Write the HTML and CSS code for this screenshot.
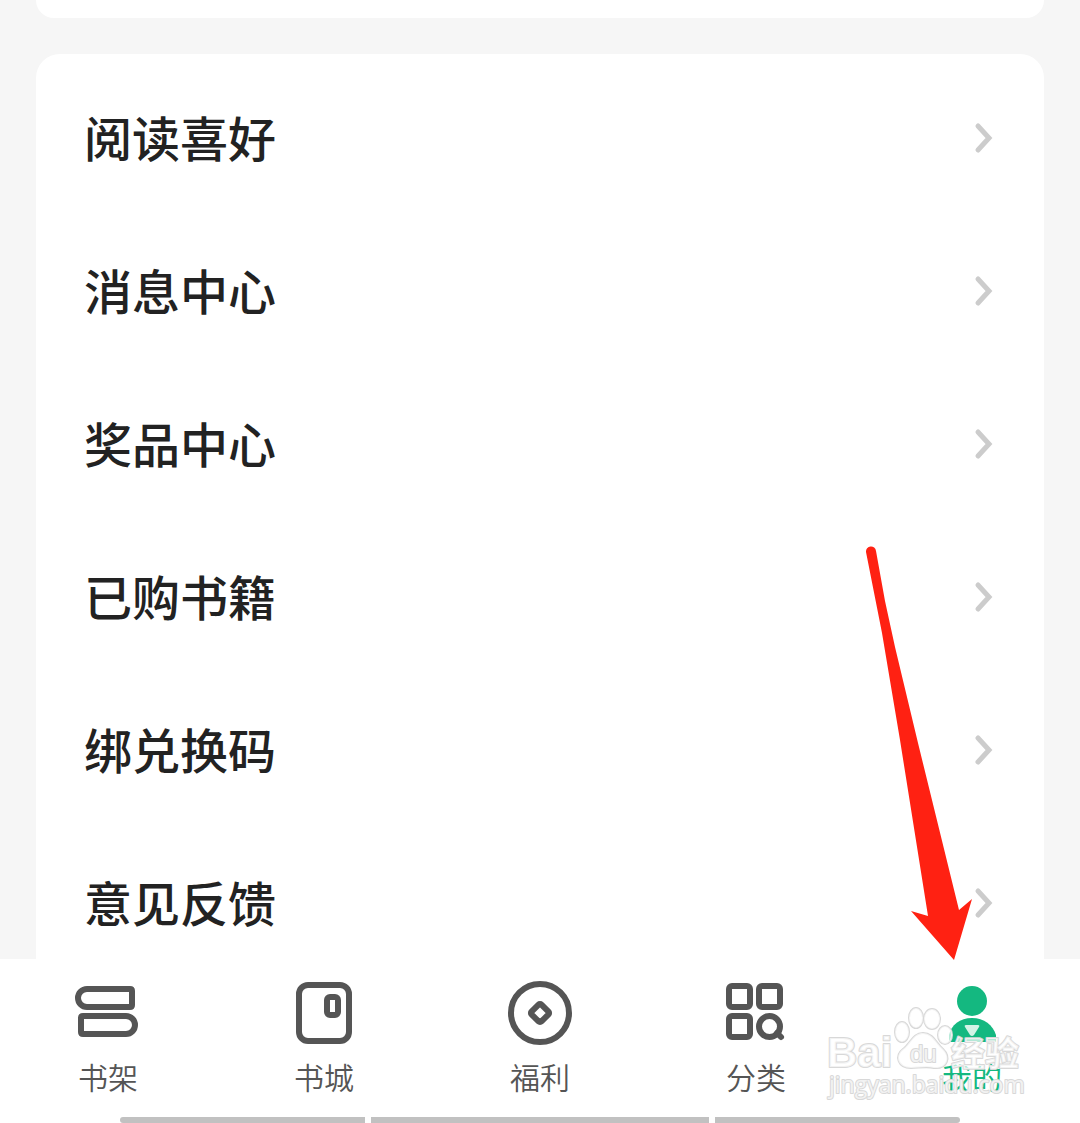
FILE: index.html
```html
<!DOCTYPE html>
<html lang="zh-CN">
<head>
  <meta charset="UTF-8">
  <meta name="viewport" content="width=device-width, initial-scale=1.0">
  <title>我的</title>
  <link rel="stylesheet" href="styles.css">
</head>
<body>
  <div class="app">
    <main class="content">
      <section class="card card-prev"></section>
      <section class="card">
        <a class="row" href="#"><span>阅读喜好</span><svg class="arrow" viewBox="0 0 20 32"><path d="M4 4l11 12L4 28"/></svg></a>
        <a class="row" href="#"><span>消息中心</span><svg class="arrow" viewBox="0 0 20 32"><path d="M4 4l11 12L4 28"/></svg></a>
        <a class="row" href="#"><span>奖品中心</span><svg class="arrow" viewBox="0 0 20 32"><path d="M4 4l11 12L4 28"/></svg></a>
        <a class="row" href="#"><span>已购书籍</span><svg class="arrow" viewBox="0 0 20 32"><path d="M4 4l11 12L4 28"/></svg></a>
        <a class="row" href="#"><span>绑兑换码</span><svg class="arrow" viewBox="0 0 20 32"><path d="M4 4l11 12L4 28"/></svg></a>
        <a class="row" href="#"><span>意见反馈</span><svg class="arrow" viewBox="0 0 20 32"><path d="M4 4l11 12L4 28"/></svg></a>
      </section>
    </main>

    <nav class="tab-bar">
      <a class="tab-item" href="#">
        <svg class="icon" viewBox="0 0 64 64">
          <path d="M11 8H54q2 0 2 2V24q0 2-2 2H11a9 9 0 0 1 0-18z"/>
          <path d="M50 35H7q-2 0-2 2V51q0 2 2 2H50a9 9 0 0 0 0-18z"/>
        </svg>
        <span>书架</span>
      </a>
      <a class="tab-item" href="#">
        <svg class="icon" viewBox="0 0 64 64">
          <rect x="7" y="4" width="50" height="56" rx="9"/>
          <rect x="35" y="16" width="11" height="18" rx="3"/>
        </svg>
        <span>书城</span>
      </a>
      <a class="tab-item" href="#">
        <svg class="icon" viewBox="0 0 64 64">
          <circle cx="32" cy="32" r="29"/>
          <rect x="25" y="25" width="14" height="14" rx="2" transform="rotate(45 32 32)"/>
        </svg>
        <span>福利</span>
      </a>
      <a class="tab-item" href="#">
        <svg class="icon" viewBox="0 0 64 64">
          <rect x="5" y="5" width="21" height="21" rx="3"/>
          <rect x="35" y="5" width="21" height="21" rx="3"/>
          <rect x="5" y="35" width="21" height="21" rx="3"/>
          <circle cx="45.500" cy="45.500" r="10.500"/>
          <path d="M53 52l4 4"/>
        </svg>
        <span>分类</span>
      </a>
      <a class="tab-item active" href="#">
        <svg class="icon" viewBox="0 0 64 64">
          <circle cx="32" cy="20" r="15"/>
          <path d="M9 61V54C11 44 20 37 32 37S53 44 56 54V61z"/>
          <path class="collar" d="M26 44H38q2 0 1 2L34 54q-2 2-4 0L25 46q-1-2 1-2z"/>
        </svg>
        <span>我的</span>
      </a>
      <svg class="watermark" viewBox="0 0 200 104">
        <g class="mark">
          <text x="1" y="66" class="bai">Bai</text>
          <ellipse cx="76" cy="31" rx="7" ry="10"/>
          <ellipse cx="90" cy="17" rx="7" ry="10"/>
          <ellipse cx="106" cy="18" rx="8" ry="10"/>
          <ellipse cx="119" cy="34" rx="7" ry="9"/>
          <path d="M97 32C87 32 84 43 77 48C68 55 72 67 85 67C92 67 101 65 108 67C122 68 125 56 117 48C110 42 107 32 97 32z"/>
          <text x="84" y="61" class="du">du</text>
          <text x="125" y="65" class="jingyan">经验</text>
          <text x="3" y="92" class="url">jingyan.baidu.com</text>
        </g>
      </svg>
    </nav>
    <div class="home-bar"><i></i><i></i><i></i></div>

    <svg class="pointer" viewBox="0 0 110 415">
      <path d="M1 6A5 5 0 0 1 11 5L20 55L30 101L53 197L94 364L107 353L89 414L46 365L63 370L35 194L17 87z"/>
    </svg>
  </div>
</body>
</html>
```
FILE: styles.css
```css
* {
  box-sizing: border-box;
}

body {
  margin: 0;
  background: #f6f6f6;
  font-family: "Noto Sans CJK SC", sans-serif;
}

.app {
  position: relative;
  display: flex;
  flex-direction: column;
  height: 100vh;
}

.content {
  flex: 1;
  min-height: 0;
  padding: 0 36px;
  overflow: hidden;
}

.card {
  padding: 7px 50px 7px 48px;
  border-radius: 24px;
  background: #fff;
}

.card-prev {
  height: 18px;
  margin-bottom: 36px;
  border-radius: 0 0 24px 24px;
}

.row {
  display: flex;
  align-items: center;
  justify-content: space-between;
  height: 153px;
  color: #222;
  font-size: 48px;
  font-weight: 500;
  line-height: 72px;
  text-decoration: none;
}

.row span {
  padding-bottom: 4px;
}

.arrow {
  width: 20px;
  height: 32px;
  fill: none;
  stroke: #ccc;
  stroke-width: 5;
  stroke-linecap: round;
}

.tab-bar {
  position: relative;
  display: flex;
  height: 158px;
  padding-top: 22px;
  background: #fff;
}

.tab-item {
  flex: 1;
  display: flex;
  flex-direction: column;
  align-items: center;
  gap: 11px;
  color: #555;
  font-size: 30px;
  font-weight: 350;
  line-height: 40px;
  text-decoration: none;
}

.tab-item.active {
  color: #14b880;
  font-weight: 400;
}

.icon {
  width: 64px;
  height: 64px;
  fill: none;
  stroke: #555;
  stroke-width: 6;
  stroke-linecap: round;
  overflow: visible;
}

.active .icon {
  fill: #14b880;
  stroke: none;
}

.active .collar {
  fill: #d3f3e6;
}

/* 水印 */
.watermark {
  position: absolute;
  right: 54px;
  bottom: 12px;
  width: 200px;
  height: 104px;
  pointer-events: none;
}

.mark {
  fill: #fff;
  fill-opacity: .7;
  stroke: #d8d8d8;
  stroke-width: 2;
  stroke-linejoin: round;
  paint-order: stroke;
  font-family: "Open Sans", "Noto Sans CJK SC", sans-serif;
}

.bai {
  font-family: "Liberation Sans", sans-serif;
  font-size: 42px;
  font-weight: 700;
}

.du {
  font-family: "Liberation Sans", sans-serif;
  font-size: 24px;
}

.jingyan {
  font-size: 34px;
  font-weight: 700;
}

.url {
  font-size: 23px;
}

.home-bar {
  display: flex;
  gap: 6px;
  height: 6px;
  padding: 0 120px;
  background: #fff;
}

.home-bar i {
  flex: 245;
  background: #c1c1c1;
}

.home-bar i:nth-child(2) {
  flex: 338;
}

.home-bar i:first-child {
  border-radius: 3px 0 0 3px;
}

.home-bar i:last-child {
  border-radius: 0 3px 3px 0;
}

.pointer {
  position: absolute;
  right: 105px;
  bottom: 162px;
  width: 110px;
  height: 415px;
  fill: #ff2112;
}
```
